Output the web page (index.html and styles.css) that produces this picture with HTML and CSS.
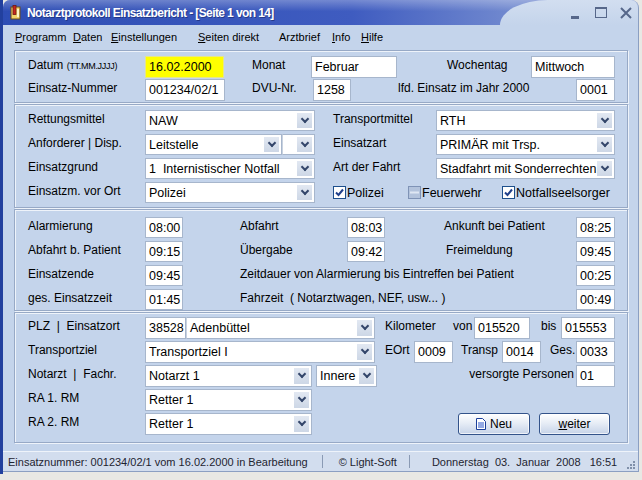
FILE: index.html
```html
<!DOCTYPE html>
<html lang="de">
<head>
    <meta charset="UTF-8">
    <title>Notarztprotokoll Einsatzbericht</title>
    <link rel="stylesheet" href="styles.css">
</head>
<body>
<div class="desktop">
    <div class="side"></div>
    <div class="window">
        <header class="titlebar">
            <svg class="appicon" width="11" height="15" viewBox="0 0 11 15">
                <rect x="1" y="2" width="9" height="12" fill="#f3d36a" stroke="#6b4a1a"/>
                <rect x="3" y="0.5" width="3" height="9" fill="#c8281e" stroke="#6b1a12" stroke-width="0.8"/>
                <rect x="7" y="4" width="2" height="8" fill="#fff6c8"/>
            </svg>
            <span class="title">Notarztprotokoll Einsatzbericht - [Seite 1 von 14]</span>
            <div class="controls">
                <span class="min"></span>
                <span class="max"></span>
                <svg class="close" width="12" height="12" viewBox="0 0 12 12">
                    <path d="M1 1 L11 11 M11 1 L1 11" stroke="#56678a" stroke-width="2"/>
                </svg>
            </div>
        </header>

        <nav class="menu">
            <a class="m-prog"><u>P</u>rogramm</a>
            <a class="m-daten"><u>D</u>aten</a>
            <a class="m-einst"><u>E</u>instellungen</a>
            <a class="m-seiten"><u>S</u>eiten direkt</a>
            <a class="m-arzt">Arztbrief</a>
            <a class="m-info"><u>I</u>nfo</a>
            <a><u>H</u>ilfe</a>
        </nav>

        <main class="form">
            <!-- Kopfdaten -->
            <section class="panel p1">
                <div class="row">
                    <span class="lab">Datum <small>(TT.MM.JJJJ)</small></span>
                    <span class="field yellow w79">16.02.2000</span>
                    <span class="lab w59 ml28">Monat</span>
                    <span class="field w86">Februar</span>
                    <span class="lab w134 pl50">Wochentag</span>
                    <span class="field w84">Mittwoch</span>
                </div>
                <div class="row">
                    <span class="lab">Einsatz-Nummer</span>
                    <span class="field w80">001234/02/1</span>
                    <span class="lab w61 ml27">DVU-Nr.</span>
                    <span class="field w38">1258</span>
                    <span class="lab w225 pl47">lfd. Einsatz im Jahr 2000</span>
                    <span class="field w39">0001</span>
                </div>
            </section>

            <!-- Einsatzmittel -->
            <section class="panel p2">
                <div class="row">
                    <span class="lab">Rettungsmittel</span>
                    <span class="combo w170"><span class="val">NAW</span><span class="arrow"></span></span>
                    <span class="lab w103 ml18">Transportmittel</span>
                    <span class="combo w179"><span class="val">RTH</span><span class="arrow"></span></span>
                </div>
                <div class="row">
                    <span class="lab">Anforderer | Disp.</span>
                    <span class="combo w137"><span class="val">Leitstelle</span><span class="arrow"></span></span>
                    <span class="combo w33 join"><span class="val"></span><span class="arrow"></span></span>
                    <span class="lab w103 ml18">Einsatzart</span>
                    <span class="combo w179"><span class="val">PRIMÄR mit Trsp.</span><span class="arrow"></span></span>
                </div>
                <div class="row">
                    <span class="lab">Einsatzgrund</span>
                    <span class="combo w170"><span class="val">1&nbsp; Internistischer Notfall</span><span class="arrow"></span></span>
                    <span class="lab w103 ml18">Art der Fahrt</span>
                    <span class="combo w179"><span class="val">Stadfahrt mit Sonderrechten</span><span class="arrow"></span></span>
                </div>
                <div class="row">
                    <span class="lab">Einsatzm. vor Ort</span>
                    <span class="combo w170"><span class="val">Polizei</span><span class="arrow"></span></span>
                    <label class="check w75 ml18">
                        <svg class="box" width="13" height="13" viewBox="0 0 13 13">
                            <rect x="0.5" y="0.5" width="12" height="12" fill="#fff" stroke="#1d4f8c"/>
                            <path d="M3 6.5 L5.5 9 L10 3.5" fill="none" stroke="#1f3f8a" stroke-width="2"/>
                        </svg><span>Polizei</span>
                    </label>
                    <label class="check w94">
                        <svg class="box" width="13" height="13" viewBox="0 0 13 13">
                            <rect x="0.5" y="0.5" width="12" height="12" fill="#b3c3dc" stroke="#7f93b6"/>
                            <rect x="2" y="5.5" width="9" height="2" fill="#dfe7f3"/>
                        </svg><span>Feuerwehr</span>
                    </label>
                    <label class="check">
                        <svg class="box" width="13" height="13" viewBox="0 0 13 13">
                            <rect x="0.5" y="0.5" width="12" height="12" fill="#fff" stroke="#1d4f8c"/>
                            <path d="M3 6.5 L5.5 9 L10 3.5" fill="none" stroke="#1f3f8a" stroke-width="2"/>
                        </svg><span>Notfallseelsorger</span>
                    </label>
                </div>
            </section>

            <!-- Zeiten -->
            <section class="panel p3">
                <div class="row">
                    <span class="lab">Alarmierung</span>
                    <span class="field w38">08:00</span>
                    <span class="lab w107 ml57">Abfahrt</span>
                    <span class="field w38">08:03</span>
                    <span class="lab w191 pl59">Ankunft bei Patient</span>
                    <span class="field w39">08:25</span>
                </div>
                <div class="row">
                    <span class="lab">Abfahrt b. Patient</span>
                    <span class="field w38">09:15</span>
                    <span class="lab w107 ml57">Übergabe</span>
                    <span class="field w38">09:42</span>
                    <span class="lab w191 pl61">Freimeldung</span>
                    <span class="field w39">09:45</span>
                </div>
                <div class="row">
                    <span class="lab">Einsatzende</span>
                    <span class="field w38">09:45</span>
                    <span class="lab w336 ml57">Zeitdauer von Alarmierung bis Eintreffen bei Patient</span>
                    <span class="field w39">00:25</span>
                </div>
                <div class="row">
                    <span class="lab">ges. Einsatzzeit</span>
                    <span class="field w38">01:45</span>
                    <span class="lab w336 ml57">Fahrzeit&nbsp; ( Notarztwagen, NEF, usw... )</span>
                    <span class="field w39">00:49</span>
                </div>
            </section>

            <!-- Ort und Personal -->
            <section class="panel p4">
                <div class="row">
                    <span class="lab">PLZ &nbsp;| &nbsp;Einsatzort</span>
                    <span class="field w41">38528</span>
                    <span class="combo w189 join"><span class="val">Adenbüttel</span><span class="arrow"></span></span>
                    <span class="lab w68 ml10">Kilometer</span>
                    <span class="lab w21">von</span>
                    <span class="field w56">015520</span>
                    <span class="lab w31 pl11">bis</span>
                    <span class="field w54">015553</span>
                </div>
                <div class="row">
                    <span class="lab">Transportziel</span>
                    <span class="combo w230"><span class="val">Transportziel I</span><span class="arrow"></span></span>
                    <span class="lab w29 ml10">EOrt</span>
                    <span class="field w39">0009</span>
                    <span class="lab w49 pl8">Transp</span>
                    <span class="field w39">0014</span>
                    <span class="lab w35 pl9">Ges.</span>
                    <span class="field w39">0033</span>
                </div>
                <div class="row">
                    <span class="lab">Notarzt &nbsp;| &nbsp;Fachr.</span>
                    <span class="combo w167"><span class="val">Notarzt 1</span><span class="arrow"></span></span>
                    <span class="combo w61 ml4"><span class="val">Innere</span><span class="arrow"></span></span>
                    <span class="lab w199 right">versorgte Personen</span>
                    <span class="field w39">01</span>
                </div>
                <div class="row">
                    <span class="lab">RA 1. RM</span>
                    <span class="combo w167"><span class="val">Retter 1</span><span class="arrow"></span></span>
                </div>
                <div class="row">
                    <span class="lab">RA 2. RM</span>
                    <span class="combo w167"><span class="val">Retter 1</span><span class="arrow"></span></span>
                    <button class="btn w72 ml146">
                        <svg width="10" height="12" viewBox="0 0 10 12">
                            <path d="M0.5 0.5 H6.5 L9.5 3.5 V11.5 H0.5 Z" fill="#fff" stroke="#1c3f9a"/>
                            <path d="M2 5 H8 M2 7 H8 M2 9 H8" stroke="#2a55c8"/>
                        </svg><span>Neu</span>
                    </button>
                    <button class="btn w71 ml9"><span><u>w</u>eiter</span></button>
                </div>
            </section>
        </main>

        <footer class="status">
            <span>Einsatznummer: 001234/02/1 vom 16.02.2000 in Bearbeitung</span>
            <span class="sep s1"></span>
            <span class="copy">© Light-Soft</span>
            <span class="sep s2"></span>
            <span class="date">Donnerstag&nbsp; 03.&nbsp; Januar&nbsp; 2008&nbsp;&nbsp; 16:51</span>
            <svg class="grip" width="10" height="10" viewBox="0 0 10 10">
                <rect x="8" y="2" width="2" height="2" fill="#8090aa"/>
                <rect x="5" y="5" width="2" height="2" fill="#8090aa"/>
                <rect x="8" y="5" width="2" height="2" fill="#8090aa"/>
                <rect x="2" y="8" width="2" height="2" fill="#8090aa"/>
                <rect x="5" y="8" width="2" height="2" fill="#8090aa"/>
                <rect x="8" y="8" width="2" height="2" fill="#8090aa"/>
            </svg>
        </footer>
    </div>
</div>
</body>
</html>
```

FILE: styles.css
```css
* {
    box-sizing: border-box;
}
body {
    margin: 0;
    font-family: "Liberation Sans", Arial, sans-serif;
    font-size: 12px;
    color: #000;
    background: #e8e8e4;
}
.desktop {
    display: flex;
    width: 642px;
    height: 480px;
}
.side {
    width: 3px;
    height: 474px;
    background: #22409e;
}
.window {
    width: 636px;
    height: 472px;
    display: flex;
    flex-direction: column;
    background: #c4d4eb;
    border-right: 1px solid #8b9fc2;
    border-bottom: 1px solid #8b9fc2;
    border-radius: 7px 8px 0 0;
    overflow: hidden;
}

/* title bar */
.titlebar {
    position: relative;
    flex: none;
    height: 25px;
    display: flex;
    align-items: center;
    padding: 0 6px 0 7px;
    color: #fff;
    background:
        linear-gradient(to bottom, rgba(255,255,255,.28), rgba(255,255,255,0) 45%),
        linear-gradient(to right, #2d4db4, #3f5cc0 55%, #7189cf 80%);
}
.titlebar::after {
    content: "";
    position: absolute;
    left: 497px;
    top: 0;
    right: 0;
    bottom: 0;
    background: linear-gradient(#d2def0, #c4d4eb);
    border-top-left-radius: 48px 25px;
}
.appicon {
    margin-right: 6px;
}
.title {
    font-weight: bold;
    font-size: 12px;
    letter-spacing: -0.6px;
    text-shadow: 1px 1px 0 rgba(0,0,40,.35);
}
.controls {
    position: relative;
    z-index: 1;
    margin-left: auto;
    display: flex;
    align-items: center;
}
.min {
    width: 8px;
    height: 3px;
    margin-top: 10px;
    background: #56678a;
}
.max {
    width: 12px;
    height: 11px;
    margin-left: 16px;
    border: 1px solid #56678a;
    border-top-width: 2px;
}
.close {
    margin-left: 13px;
}

/* menu */
.menu {
    flex: none;
    height: 24px;
    display: flex;
    align-items: center;
    padding-left: 12px;
    font-size: 11px;
}
.menu a {
    color: #000;
    text-decoration: none;
}
.m-prog { width: 58px; }
.m-daten { width: 38px; }
.m-einst { width: 87px; }
.m-seiten { width: 81px; }
.m-arzt { width: 53px; }
.m-info { width: 29px; }

/* panels */
.form {
    width: 614px;
    margin: 1px 0 0 11px;
}
.panel {
    display: flex;
    flex-direction: column;
    margin-bottom: 1px;
    padding-left: 13px;
    border: 1px solid #97a9c6;
    box-shadow: inset 1px 1px 0 #eef3fa, 1px 1px 0 #eef3fa;
}
.p1 {
    height: 53px;
    padding-top: 5px;
    gap: 1px;
}
.p1 .row { height: 22px; }
.p2 {
    height: 104px;
    padding-top: 5px;
    gap: 3px;
}
.p2 .row { height: 21px; }
.p3 {
    height: 102px;
    padding-top: 7px;
    gap: 3px;
}
.p3 .row { height: 21px; }
.p4 {
    height: 131px;
    padding-top: 4px;
    gap: 2px;
}
.p4 .row { height: 22px; }

.row {
    display: flex;
    align-items: stretch;
}
.lab {
    flex: none;
    width: 117px;
    padding-top: 2px;
    line-height: 14px;
    white-space: nowrap;
}
.lab small {
    font-size: 9px;
    letter-spacing: -0.3px;
}
.right {
    text-align: right;
    padding-right: 2px;
}
.field, .combo {
    flex: none;
    background: #fff;
    border: 1px solid #a7b6cc;
    font-size: 12.5px;
    white-space: nowrap;
    overflow: hidden;
}
.field {
    padding: 1px 3px 0;
    line-height: 18px;
}
.yellow {
    background: #ffff00;
    border-color: #e6e68a;
}
.combo {
    display: flex;
}
.combo .val {
    flex: 1;
    padding: 1px 3px 0;
    line-height: 18px;
    overflow: hidden;
}
.join {
    border-left: 1px solid #c8d2e0;
}
.arrow {
    position: relative;
    flex: none;
    width: 15px;
    margin: 2px 2px 2px 0;
    background: linear-gradient(#e2e8f2, #cdd7e6);
}
.arrow::before {
    content: "";
    position: absolute;
    left: 5px;
    top: 3px;
    width: 4px;
    height: 4px;
    border-right: 2px solid #34466a;
    border-bottom: 2px solid #34466a;
    transform: rotate(45deg);
}

.check {
    display: flex;
    align-items: center;
    flex: none;
    font-size: 12.5px;
    white-space: nowrap;
}
.box {
    margin-right: 1px;
}

.btn {
    flex: none;
    display: flex;
    align-items: center;
    justify-content: center;
    gap: 4px;
    padding: 0;
    font-family: inherit;
    font-size: 12px;
    color: #000;
    border: 1px solid #33538a;
    border-radius: 3px;
    background: linear-gradient(#ffffff, #e7edf6 45%, #c6d3e8);
    box-shadow: inset 0 0 0 1px rgba(255,255,255,.7);
}

/* widths and gaps */
.w21 { width: 21px; }
.w29 { width: 29px; }
.w31 { width: 31px; }
.w33 { width: 33px; }
.w35 { width: 35px; }
.w38 { width: 38px; }
.w39 { width: 39px; }
.w41 { width: 41px; }
.w49 { width: 49px; }
.w54 { width: 54px; }
.w56 { width: 56px; }
.w59 { width: 59px; }
.w61 { width: 61px; }
.w68 { width: 68px; }
.w71 { width: 71px; }
.w72 { width: 72px; }
.w75 { width: 75px; }
.w79 { width: 79px; }
.w80 { width: 80px; }
.w84 { width: 84px; }
.w86 { width: 86px; }
.w94 { width: 94px; }
.w103 { width: 103px; }
.w107 { width: 107px; }
.w134 { width: 134px; }
.w137 { width: 137px; }
.w167 { width: 167px; }
.w170 { width: 170px; }
.w179 { width: 179px; }
.w189 { width: 189px; }
.w191 { width: 191px; }
.w199 { width: 199px; }
.w225 { width: 225px; }
.w230 { width: 230px; }
.w336 { width: 336px; }
.ml4 { margin-left: 4px; }
.ml9 { margin-left: 9px; }
.ml10 { margin-left: 10px; }
.ml18 { margin-left: 18px; }
.ml27 { margin-left: 27px; }
.ml28 { margin-left: 28px; }
.ml57 { margin-left: 57px; }
.ml146 { margin-left: 146px; }
.pl8 { padding-left: 8px; }
.pl9 { padding-left: 9px; }
.pl11 { padding-left: 11px; }
.pl47 { padding-left: 47px; }
.pl50 { padding-left: 50px; }
.pl59 { padding-left: 59px; }
.pl61 { padding-left: 61px; }

/* status bar */
.status {
    flex: none;
    height: 20px;
    margin-top: auto;
    display: flex;
    align-items: center;
    padding-left: 5px;
    font-size: 11px;
    color: #1e2430;
    white-space: nowrap;
    background: #d2ddee;
    border-top: 1px solid #eef3fa;
}
.status > * {
    flex: none;
}
.sep {
    width: 1px;
    height: 13px;
    background: #8a9ab4;
}
.s1 { margin-left: 14px; }
.copy { margin-left: 16px; }
.s2 { margin-left: 12px; }
.date { margin-left: 22px; }
.grip {
    margin-left: auto;
    margin-right: 3px;
    align-self: flex-end;
    margin-bottom: 2px;
}
```
